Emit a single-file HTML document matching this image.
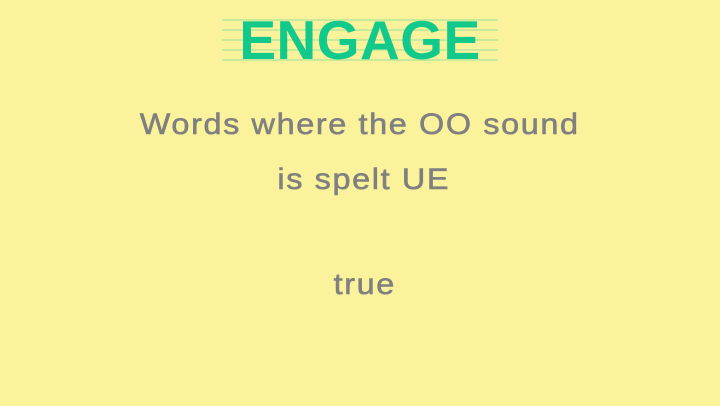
<html><head><style>
body{margin:0;width:720px;height:406px;background:#fbf29c;position:relative;overflow:hidden;font-family:"Liberation Sans",sans-serif}
.l{position:absolute;left:222px;width:276px;height:2px;background:#c9ea9a}
.e{position:absolute;left:0;width:720px;top:10px;text-align:center;font-weight:bold;font-size:55px;color:#10c98a;line-height:60px;letter-spacing:0.5px}
.t{position:absolute;left:0;width:720px;text-align:center;color:#808080;font-size:30px;letter-spacing:1.5px;-webkit-text-stroke:0.6px #808080;transform:scaleX(1.08);transform-origin:363px 0}
</style></head><body>
<div class="l" style="top:19px"></div><div class="l" style="top:29px"></div><div class="l" style="top:39px"></div><div class="l" style="top:49px"></div><div class="l" style="top:59px"></div>
<div class="e">ENGAGE</div>
<div class="t" style="top:108px">Words where the OO sound</div>
<div class="t" style="top:163px;left:4px">is spelt UE</div>
<div class="t" style="top:268px;left:5px">true</div>
</body></html>
